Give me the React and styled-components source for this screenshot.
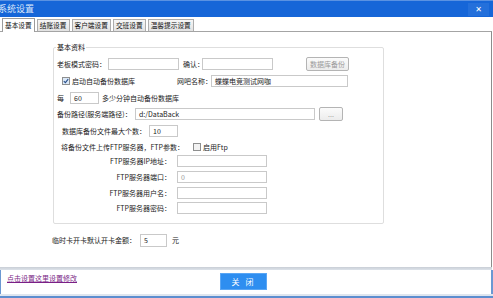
import styled, { createGlobalStyle } from "styled-components"

const Global = createGlobalStyle`
    html, body { margin: 0; padding: 0; background: #fff; }
    body { font-family: "Noto Sans CJK SC", "Liberation Sans", sans-serif; }
    #root { width: 493px; height: 298px; }
`

const Window = styled.div`
    width: 493px;
    height: 298px;
    display: flex;
    flex-direction: column;
    background: #fff;
    overflow: hidden;
    font-size: 7px;
    color: #222;
`

const TitleBar = styled.div`
    height: 16px;
    flex: none;
    background: #1666d8;
    border-top: 1px solid #5a92e2;
    display: flex;
    align-items: center;
    justify-content: space-between;
    color: #dce8fa;
    font-size: 9px;
    span {
        margin-left: -2px;
        line-height: 16px;
    }
`

const CloseBtn = styled.div`
    width: 21px;
    height: 13px;
    margin-right: 4px;
    background: #2470db;
    display: flex;
    align-items: center;
    justify-content: center;
    color: #fff;
    font-family: "DejaVu Sans", sans-serif;
    font-weight: bold;
    font-size: 8px;
`

const TabStrip = styled.div`
    height: 14px;
    flex: none;
    display: flex;
    align-items: flex-end;
    gap: 2px;
    padding-left: 2px;
    position: relative;
    z-index: 1;
`

const Tab = styled.div`
    height: ${p => (p.$active ? "13px" : "11px")};
    margin-bottom: ${p => (p.$active ? "-1px" : "0")};
    padding: 0 2px;
    border: 1px solid ${p => (p.$active ? "#9c9c9c" : "#acacac")};
    border-bottom: none;
    background: ${p => (p.$active ? "#fff" : "linear-gradient(#f6f6f6, #e2e2e2)")};
    font-size: 6.7px;
    line-height: ${p => (p.$active ? "12px" : "11px")};
    color: #111;
    white-space: nowrap;
`

const Panel = styled.div`
    height: 235px;
    flex: none;
    margin-right: 1px;
    border-top: 1px solid #a4a4a4;
    border-right: 1px solid #8c8c8c;
    display: flex;
    flex-direction: column;
`

const GroupBox = styled.div`
    position: relative;
    box-sizing: border-box;
    margin: 15px 0 0 53px;
    width: 331px;
    height: 177px;
    border: 1px solid #dedede;
    border-radius: 2px;
    display: flex;
    flex-direction: column;
`

const Legend = styled.span`
    position: absolute;
    top: -6px;
    left: 2px;
    padding: 0 1px;
    background: #fff;
    line-height: 10px;
    color: #111;
`

const Row = styled.div`
    height: 14px;
    flex: none;
    margin-top: ${p => p.$mt || 0}px;
    padding-left: ${p => p.$pl || 0}px;
    display: flex;
    align-items: center;
`

const Label = styled.span`
    width: ${p => (p.$w ? `${p.$w}px` : "auto")};
    margin-left: ${p => p.$ml || 0}px;
    flex: none;
    text-align: ${p => (p.$right ? "right" : "left")};
    white-space: nowrap;
    line-height: 10px;
`

const Input = styled.div`
    box-sizing: border-box;
    width: ${p => p.$w}px;
    height: ${p => p.$h || 12}px;
    margin-left: ${p => p.$ml || 0}px;
    flex: none;
    border: 1px solid #c9c9c9;
    background: #fff;
    padding-left: 3px;
    font-size: 7px;
    line-height: ${p => (p.$h || 12) - 2}px;
    color: ${p => (p.$muted ? "#999" : "#222")};
    font-family: "Noto Sans CJK SC", "Liberation Sans", sans-serif;
    white-space: nowrap;
    overflow: hidden;
`

const Button = styled.div`
    box-sizing: border-box;
    width: ${p => p.$w}px;
    height: 14px;
    margin-left: ${p => p.$ml || 0}px;
    flex: none;
    border: 1px solid #b4b4b4;
    border-radius: 2px;
    background: linear-gradient(#fbfbfb, #ececec);
    color: #9a9a9a;
    text-align: center;
    line-height: 12px;
    font-size: 7px;
`

const Check = styled.span`
    box-sizing: border-box;
    width: 8px;
    height: 8px;
    margin-left: ${p => p.$ml || 0}px;
    margin-right: 2px;
    flex: none;
    border: 1px solid #8e8f8f;
    background: ${p => (p.$on ? "#dbe9f8" : "#f2f2f2")};
    display: flex;
    align-items: center;
    justify-content: center;
`

const Band = styled.div`
    height: 3px;
    flex: none;
    margin-right: 1px;
    background: linear-gradient(#c9ced6, #dde3ea);
`

const Footer = styled.div`
    height: 24px;
    flex: none;
    border-left: 1px solid #6b98d2;
    border-right: 2px solid #6b98d2;
    display: flex;
    align-items: flex-start;
`

const Link = styled.a`
    margin: 4px 0 0 6px;
    width: 72px;
    color: #7a1f86;
    text-decoration: underline;
    font-size: 7px;
    line-height: 9px;
    white-space: nowrap;
`

const CloseButton = styled.div`
    margin: 3px 0 0 141px;
    width: 47px;
    height: 17px;
    background: #2e8ef0;
    border: 1px solid #5aa6f4;
    box-sizing: border-box;
    color: #fff;
    font-size: 8px;
    line-height: 15px;
    text-align: center;
    letter-spacing: 2px;
`

const BottomEdge = styled.div`
    height: 4px;
    flex: none;
    background: linear-gradient(#dfe6ef 0 2px, #5d8ecf 2px 4px);
`

const Tick = () => (
    <svg width="6" height="6" viewBox="0 0 6 6">
        <path d="M0.8 3.1 L2.4 4.7 L5.2 1.2" fill="none" stroke="#2a4f8a" strokeWidth="1.1" />
    </svg>
)

const tabs = ["基本设置", "结账设置", "客户端设置", "交班设置", "温馨提示设置"]

const ftpRows = [
    { label: "FTP服务器IP地址：", mt: 0, value: "" },
    { label: "FTP服务器端口：", mt: 2, value: "0" },
    { label: "FTP服务器用户名：", mt: 2, value: "" },
    { label: "FTP服务器密码：", mt: 1, value: "" },
]

export default function App() {
    return (
        <Window>
            <Global />
            <TitleBar>
                <span>系统设置</span>
                <CloseBtn>✕</CloseBtn>
            </TitleBar>
            <TabStrip>
                {tabs.map((t, i) => (
                    <Tab key={t} $active={i === 0}>{t}</Tab>
                ))}
            </TabStrip>
            <Panel>
                <GroupBox>
                    <Legend>基本资料</Legend>
                    <Row $mt={9} $pl={3}>
                        <Label $w={51}>老板模式密码：</Label>
                        <Input $w={71} />
                        <Label $w={19} $ml={4}>确认：</Label>
                        <Input $w={71} />
                        <Button $w={43} $ml={33}>数据库备份</Button>
                    </Row>
                    <Row $mt={3} $pl={8}>
                        <Check $on><Tick /></Check>
                        <Label $w={105}>启动自动备份数据库</Label>
                        <Label $w={34}>网吧名称：</Label>
                        <Input $w={137}>蝶蝶电竞测试网咖</Input>
                    </Row>
                    <Row $mt={3} $pl={3}>
                        <Label $w={13}>每</Label>
                        <Input $w={29}>60</Input>
                        <Label $ml={3}>多少分钟自动备份数据库</Label>
                    </Row>
                    <Row $mt={2} $pl={3}>
                        <Label $w={78}>备份路径(服务端路径)：</Label>
                        <Input $w={180}>d:/DataBack</Input>
                        <Button $w={24} $ml={4}>...</Button>
                    </Row>
                    <Row $mt={3} $pl={8}>
                        <Label $w={87}>数据库备份文件最大个数：</Label>
                        <Input $w={29}>10</Input>
                    </Row>
                    <Row $mt={2} $pl={7}>
                        <Label $w={132}>将备份文件上传FTP服务器，FTP参数：</Label>
                        <Check />
                        <Label>启用Ftp</Label>
                    </Row>
                    {ftpRows.map(r => (
                        <Row key={r.label} $mt={r.mt}>
                            <Label $w={117} $right>{r.label}</Label>
                            <Input $w={90} $ml={6} $muted>{r.value}</Input>
                        </Row>
                    ))}
                </GroupBox>
                <Row $mt={9} $pl={52}>
                    <Label $w={88}>临时卡开卡默认开卡金额：</Label>
                    <Input $w={27} $h={13}>5</Input>
                    <Label $ml={5}>元</Label>
                </Row>
            </Panel>
            <Band />
            <Footer>
                <Link>点击设置这里设置修改</Link>
                <CloseButton>关 闭</CloseButton>
            </Footer>
            <BottomEdge />
        </Window>
    )
}
